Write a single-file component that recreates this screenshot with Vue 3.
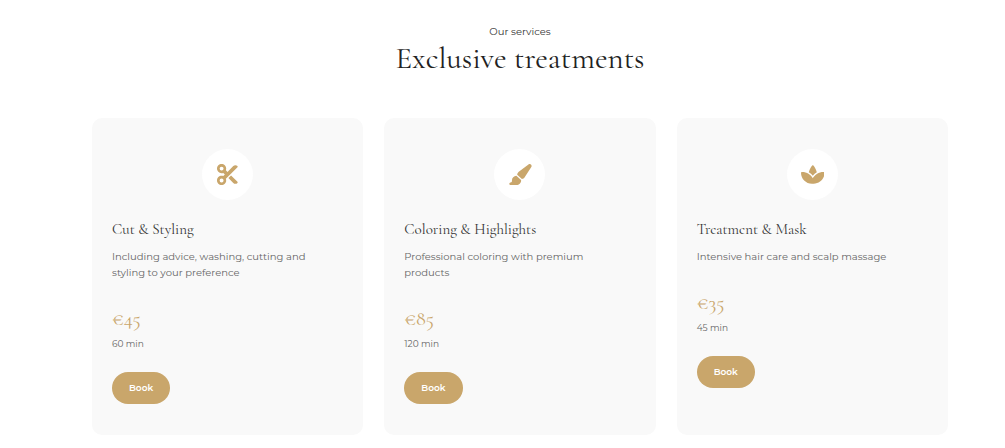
<script setup>
const services = [
  {
    name: 'Cut & Styling',
    text: 'Including advice, washing, cutting and styling to your preference',
    price: '€45',
    time: '60 min',
    viewBox: '0 0 512 512',
    icon: 'M256 192l-39.5-39.5c4.9-12.6 7.5-26.2 7.5-40.5C224 50.1 173.9 0 112 0S0 50.1 0 112s50.1 112 112 112c14.3 0 27.9-2.7 40.5-7.5L192 256l-39.5 39.5c-12.6-4.9-26.2-7.5-40.5-7.5C50.1 288 0 338.1 0 400s50.1 112 112 112s112-50.1 112-112c0-14.3-2.7-27.9-7.5-40.5L499.2 76.8c7.1-7.1 7.1-18.5 0-25.6c-28.3-28.3-74.1-28.3-102.4 0L256 192zm22.6 150.6L396.8 460.8c28.3 28.3 74.1 28.3 102.4 0c7.1-7.1 7.1-18.5 0-25.6L342.6 278.6l-64 64zM64 112a48 48 0 1 1 96 0 48 48 0 1 1-96 0zm48 240a48 48 0 1 1 0 96 48 48 0 1 1 0-96z',
  },
  {
    name: 'Coloring & Highlights',
    text: 'Professional coloring with premium products',
    price: '€85',
    time: '120 min',
    viewBox: '0 0 576 512',
    icon: 'M339.3 367.1c27.3-3.9 51.9-19.4 67.2-42.9L568.2 74.1c12.6-19.5 9.4-45.3-7.6-61.2S517.7-4.4 499.1 9.6L262.4 187.2c-24 18-38.2 46.1-38.4 76.1L339.3 367.1zm-19.6 25.4l-116-104.4C143.9 290.3 96 339.6 96 400c0 3.9 .2 7.8 .6 11.6C98.4 429.1 86.4 448 68.8 448H64c-17.7 0-32 14.3-32 32s14.3 32 32 32H208c61.9 0 112-50.1 112-112c0-2.5-.1-5-.2-7.5z',
  },
  {
    name: 'Treatment & Mask',
    text: 'Intensive hair care and scalp massage',
    price: '€35',
    time: '45 min',
    viewBox: '0 0 576 512',
    icon: 'M183.1 235.3c33.7 20.7 62.9 48.1 85.8 80.5c7 9.9 13.4 20.3 19.1 31c5.7-10.8 12.1-21.1 19.1-31c22.9-32.4 52.1-59.8 85.8-80.5C437.6 207.8 490.1 192 546 192h9.9c11.1 0 20.1 9 20.1 20.1C576 360.1 456.1 480 308.1 480H288 267.9C119.9 480 0 360.1 0 212.1C0 201 9 192 20.1 192H30c55.9 0 108.4 15.8 153.1 43.3zM301.5 37.6c15.7 16.9 61.1 71.8 84.4 164.6c-38 21.6-71.4 50.8-97.9 85.6c-26.5-34.8-59.9-63.9-97.9-85.6c23.2-92.8 68.6-147.7 84.4-164.6C278 33.9 282.9 32 288 32s9.8 1.9 13.5 5.6z',
  },
]
</script>

<template>
  <section class="services">
    <header class="heading">
      <p class="eyebrow">Our services</p>
      <h2 class="title">Exclusive treatments</h2>
    </header>
    <div class="grid">
      <article v-for="service in services" :key="service.name" class="card">
        <div class="badge">
          <svg class="icon" :viewBox="service.viewBox" aria-hidden="true">
            <path :d="service.icon" />
          </svg>
        </div>
        <h3 class="name">{{ service.name }}</h3>
        <p class="text">{{ service.text }}</p>
        <p class="price">{{ service.price }}</p>
        <p class="time">{{ service.time }}</p>
        <button type="button" class="book">Book</button>
      </article>
    </div>
  </section>
</template>

<style>
body {
  margin: 0;
  background: #fff;
}
</style>

<style scoped>
.services {
  padding: 23px 57px 13px 92px;
  font-family: Montserrat, Inter, sans-serif;
}

.heading {
  margin-bottom: 43px;
  text-align: center;
}

.eyebrow,
.title,
.name,
.text,
.price,
.time {
  margin: 0;
  font-weight: 400;
}

.eyebrow {
  color: #333;
  font-size: 10px;
  line-height: 18px;
}

.title {
  color: #222;
  font-family: 'Cormorant Garamond', 'Liberation Serif', serif;
  font-size: 31px;
  line-height: 34px;
}

.grid {
  display: grid;
  grid-template-columns: repeat(3, 1fr);
  gap: 21px;
}

.card {
  display: flex;
  flex-direction: column;
  align-items: flex-start;
  padding: 31px 20px;
  border-radius: 10px;
  background: #f9f9f9;
}

.badge {
  display: flex;
  align-items: center;
  justify-content: center;
  align-self: center;
  width: 51px;
  height: 51px;
  margin-bottom: 18px;
  border-radius: 50%;
  background: #fff;
}

.icon {
  height: 21px;
  fill: #c9a66b;
}

.name {
  margin-bottom: 9px;
  color: #333;
  font-family: 'Cormorant Garamond', 'Liberation Serif', serif;
  font-size: 15px;
  line-height: 22px;
}

.text {
  margin-bottom: 23px;
  padding-right: 10px;
  color: #666;
  font-size: 10px;
  line-height: 16px;
}

.price {
  color: #c9a66b;
  font-family: 'Cormorant Garamond', 'Liberation Serif', serif;
  font-size: 20px;
  line-height: 30px;
}

.time {
  margin-bottom: 18px;
  color: #666;
  font-size: 9px;
  line-height: 20px;
}

.book {
  padding: 8px 17px;
  border: 0;
  border-radius: 16px;
  background: #c9a66b;
  color: #fff;
  font-family: inherit;
  font-size: 9px;
  font-weight: 600;
  line-height: 16px;
}
</style>
